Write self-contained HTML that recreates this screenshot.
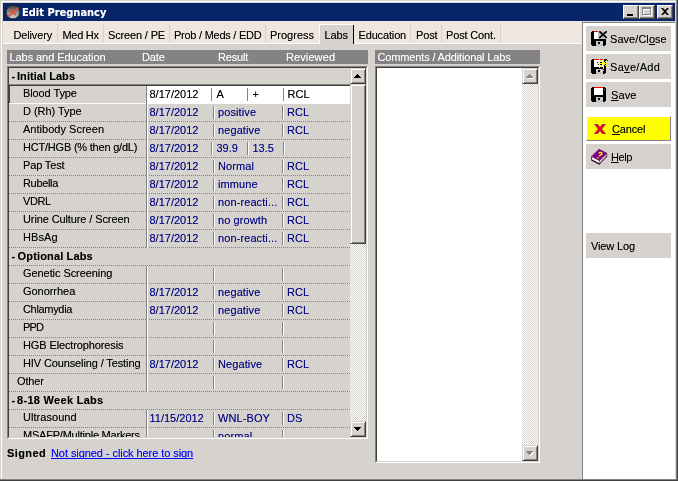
<!DOCTYPE html>
<html><head><meta charset="utf-8"><title>Edit Pregnancy</title>
<style>
*{box-sizing:border-box;margin:0;padding:0}
html,body{width:678px;height:481px;overflow:hidden;background:#d6d3ce;font-family:"Liberation Sans",sans-serif;font-size:11px;line-height:13px;color:#000;letter-spacing:-0.15px;text-shadow:0 0 0 rgba(0,0,0,.45)}
body{position:relative}
div,span,a,i,svg{position:absolute;white-space:nowrap;display:block}
u{text-decoration:underline;text-decoration-thickness:1px;text-underline-offset:1px;text-decoration-skip-ink:none}
/* window frame */
#fw{left:1px;top:1px;width:676px;height:479px;border-left:1px solid #fff;border-top:1px solid #fff}
#fr1{left:676px;top:0;width:1px;height:481px;background:#848284}
#fr2{left:677px;top:0;width:1px;height:481px;background:#424142}
#fb1{left:0;top:479px;width:677px;height:1px;background:#848284}
#fb2{left:0;top:480px;width:678px;height:1px;background:#424142}
#title{left:3px;top:3px;width:672px;height:18px;background:#08246b}
#title .t{left:19px;top:3px;color:#fff;text-shadow:0 0 0 rgba(255,255,255,.45);font-weight:bold;font-size:11px;line-height:13px;font-family:"DejaVu Sans Condensed","DejaVu Sans","Liberation Sans",sans-serif;letter-spacing:0}
.cb{top:2px;width:16px;height:14px;background:#d6d3ce;border:1px solid;border-color:#fff #424142 #424142 #fff;box-shadow:inset -1px -1px 0 #848284}
#tabs{left:3px;top:21px;width:579px;height:22px;background:#efe7de}
#tabline{left:3px;top:43px;width:579px;height:1px;background:#fff}
.tab{top:29px;height:13px}
.sep{top:24px;width:1px;height:18px;background:#d6d3ce}
#tabsel{left:319px;top:24px;width:34px;height:20px;background:#d6d3ce;border-left:1px solid #fff;border-top:1px solid #fff}
#tabselr{left:353px;top:25px;width:1px;height:19px;background:#000}
.hbar{top:50px;height:14px;background:#848284;color:#fff;text-shadow:0 0 0 rgba(255,255,255,.45)}
.hbar span{top:1px}
/* grid */
#grid{left:7px;top:66px;width:361px;height:373px;border:1px solid;border-color:#848284 #fff #fff #848284}
#gridi{left:0;top:0;width:359px;height:371px;border:1px solid;border-color:#424142 #d6d3ce #d6d3ce #424142;overflow:hidden}
.row{left:0;width:341px;height:18px}
.row::after{content:"";position:absolute;left:0;top:17px;width:341px;height:1px;background:repeating-linear-gradient(90deg,#848284 0 1px,transparent 1px 2px)}
.hy{left:2.4px;top:2px;font-weight:bold}
.ht{left:8px;top:2px;font-weight:bold}
.lb{top:1px}
.c{top:2px;color:#000084;letter-spacing:0;text-shadow:0 0 0 rgba(0,0,132,.45)}
.v{top:2px;width:2px;height:13px;background:linear-gradient(90deg,#848284 0 1px,#fff 1px 2px)}
.v.v1{left:137px;top:0;height:18px;z-index:2}
.row.sel::after{background:#fff}
.row.sel .selbg{left:138px;top:0;width:203px;height:17px;background:#fff}
.row.sel .v{background:#848284;width:1px}
#selt1{left:0;top:16px;width:341px;height:1px;background:#848284}
#selt2{left:0;top:17px;width:341px;height:1px;background:#424142}
#sell{left:0;top:17px;width:1px;height:18px;background:#424142}
.row.sel .c{color:#000;text-shadow:0 0 0 rgba(0,0,0,.45)}
/* scrollbars */
.vs{width:16px;background:repeating-conic-gradient(#fff 0 25%,#d6d3ce 0 50%) 0 0/2px 2px}
.sbtn{left:0;width:16px;height:16px;background:#d6d3ce;border:1px solid;border-color:#d6d3ce #424142 #424142 #d6d3ce;box-shadow:inset 1px 1px 0 #fff,inset -1px -1px 0 #848284}
#cbox{left:375px;top:66px;width:165px;height:397px;border:1px solid;border-color:#848284 #fff #fff #848284;background:#fff}
#cboxi{left:0;top:0;width:163px;height:395px;border:1px solid;border-color:#424142 #d6d3ce #d6d3ce #424142}
#right{left:582px;top:22px;width:93px;height:457px;background:#fff;border-left:1px solid #848284;border-top:1px solid #848284}
.btn{left:586px;width:85px;height:25px;background:#d6d3ce}
.btn .tx{top:7px}
#signed{left:7px;top:447px;font-weight:bold;letter-spacing:0.4px}
#slink{left:51px;top:447px;color:#0000ff;text-decoration:underline;text-decoration-skip-ink:none;text-decoration-thickness:1px;text-underline-offset:1px;letter-spacing:-0.07px;text-shadow:0 0 0 rgba(0,0,255,.45)}
</style></head><body>
<div id="all" style="left:0;top:0;width:678px;height:481px;will-change:transform">
<div id="fw"></div><div id="fr1"></div><div id="fr2"></div><div id="fb1"></div><div id="fb2"></div>
<div id="title">
<svg style="left:2px;top:1px" width="16" height="16" viewBox="0 0 16 16"><defs><linearGradient id="g1" x1="0" y1="0" x2="0" y2="1"><stop offset="0" stop-color="#3a3a3a"/><stop offset="0.5" stop-color="#8a8a8a"/><stop offset="1" stop-color="#d8d8d8"/></linearGradient></defs><circle cx="8" cy="8" r="6.8" fill="url(#g1)" stroke="#2a2418" stroke-width="0.8"/><path d="M3.6 12.2 L12.6 4.2" stroke="#e8503a" stroke-width="1.8" stroke-linecap="round"/><path d="M5.4 5.8 L10.4 10.4" stroke="#e8503a" stroke-width="1.5" stroke-linecap="round"/></svg>
<span class="t">Edit Pregnancy</span>
<div class="cb" style="left:620px"><i style="left:3px;top:8px;width:6px;height:2px;background:#000"></i></div>
<div class="cb" style="left:636px"><i style="left:3px;top:2px;width:9px;height:8px;border:1px solid #fff;border-top-width:2px"></i><i style="left:2px;top:1px;width:9px;height:8px;border:1px solid #848284;border-top-width:2px"></i></div>
<div class="cb" style="left:654px"><svg style="left:3px;top:2px" width="8" height="7" viewBox="0 0 8 7"><path d="M0 0h2l2 2 2-2h2L5 3.5 8 7H6L4 5 2 7H0l3-3.5z" fill="#000"/></svg></div>
</div>
<div id="tabs"></div><div id="tabline"></div>
<span class="tab" style="left:13.5px">Delivery</span><i class="sep" style="left:57px"></i>
<span class="tab" style="left:62.5px;letter-spacing:-0.3px">Med Hx</span><i class="sep" style="left:103px"></i>
<span class="tab" style="left:108px">Screen / PE</span><i class="sep" style="left:169px"></i>
<span class="tab" style="left:174px;letter-spacing:-0.25px">Prob / Meds / EDD</span><i class="sep" style="left:265px"></i>
<span class="tab" style="left:270px;letter-spacing:0px">Progress</span>
<div id="tabsel"></div><i id="tabselr"></i>
<span class="tab" style="left:324.5px">Labs</span>
<span class="tab" style="left:358.5px">Education</span><i class="sep" style="left:410px"></i>
<span class="tab" style="left:416px">Post</span><i class="sep" style="left:441px"></i>
<span class="tab" style="left:446px">Post Cont.</span><i class="sep" style="left:500px"></i>
<div class="hbar" style="left:7px;width:361px"><span style="left:2.5px;letter-spacing:-0.07px">Labs and Education</span><span style="left:135px">Date</span><span style="left:211px">Result</span><span style="left:279px;letter-spacing:0.1px">Reviewed</span></div>
<div class="hbar" style="left:375px;width:165px"><span style="left:2.5px;letter-spacing:-0.15px">Comments / Additional Labs</span></div>
<div id="grid"><div id="gridi">
<div class="row" style="top:0px"><span class="hy">-</span><span class="ht" style="letter-spacing:0.05px">Initial Labs</span></div>
<div class="row sel" style="top:18px"><i class="selbg"></i><span class="lb" style="left:14px;letter-spacing:-0.1px">Blood Type</span><i class="v v1"></i><span class="c" style="left:140.5px">8/17/2012</span><i class="v" style="left:202px"></i><span class="c" style="left:207.5px">A</span><i class="v" style="left:238px"></i><span class="c" style="left:243.5px">+</span><i class="v" style="left:274px"></i><span class="c" style="left:278.5px">RCL</span></div>
<div class="row" style="top:36px"><span class="lb" style="left:14px;letter-spacing:-0.04px">D (Rh) Type</span><i class="v v1"></i><span class="c" style="left:140.5px">8/17/2012</span><i class="v" style="left:204px"></i><span class="c" style="left:209px;letter-spacing:0.1px">positive</span><i class="v" style="left:273px"></i><span class="c" style="left:278px">RCL</span></div>
<div class="row" style="top:54px"><span class="lb" style="left:14px;letter-spacing:0.02px">Antibody Screen</span><i class="v v1"></i><span class="c" style="left:140.5px">8/17/2012</span><i class="v" style="left:204px"></i><span class="c" style="left:209px;letter-spacing:0.1px">negative</span><i class="v" style="left:273px"></i><span class="c" style="left:278px">RCL</span></div>
<div class="row" style="top:72px"><span class="lb" style="left:14px;letter-spacing:-0.21px">HCT/HGB (% then g/dL)</span><i class="v v1"></i><span class="c" style="left:140.5px">8/17/2012</span><i class="v" style="left:202px"></i><span class="c" style="left:207.5px">39.9</span><i class="v" style="left:238px"></i><span class="c" style="left:243.5px">13.5</span><i class="v" style="left:274px"></i></div>
<div class="row" style="top:90px"><span class="lb" style="left:14px">Pap Test</span><i class="v v1"></i><span class="c" style="left:140.5px">8/17/2012</span><i class="v" style="left:204px"></i><span class="c" style="left:209px;letter-spacing:0.1px">Normal</span><i class="v" style="left:273px"></i><span class="c" style="left:278px">RCL</span></div>
<div class="row" style="top:108px"><span class="lb" style="left:14px;letter-spacing:-0.34px">Rubella</span><i class="v v1"></i><span class="c" style="left:140.5px">8/17/2012</span><i class="v" style="left:204px"></i><span class="c" style="left:209px;letter-spacing:0.1px">immune</span><i class="v" style="left:273px"></i><span class="c" style="left:278px">RCL</span></div>
<div class="row" style="top:126px"><span class="lb" style="left:14px;letter-spacing:-0.4px">VDRL</span><i class="v v1"></i><span class="c" style="left:140.5px">8/17/2012</span><i class="v" style="left:204px"></i><span class="c" style="left:209px;letter-spacing:0.1px">non-reacti...</span><i class="v" style="left:273px"></i><span class="c" style="left:278px">RCL</span></div>
<div class="row" style="top:144px"><span class="lb" style="left:14px;letter-spacing:-0.11px">Urine Culture / Screen</span><i class="v v1"></i><span class="c" style="left:140.5px">8/17/2012</span><i class="v" style="left:204px"></i><span class="c" style="left:209px;letter-spacing:0.1px">no growth</span><i class="v" style="left:273px"></i><span class="c" style="left:278px">RCL</span></div>
<div class="row" style="top:162px"><span class="lb" style="left:14px;letter-spacing:0.09px">HBsAg</span><i class="v v1"></i><span class="c" style="left:140.5px">8/17/2012</span><i class="v" style="left:204px"></i><span class="c" style="left:209px;letter-spacing:0.1px">non-reacti...</span><i class="v" style="left:273px"></i><span class="c" style="left:278px">RCL</span></div>
<div class="row" style="top:180px"><span class="hy">-</span><span class="ht" style="left:8.6px;letter-spacing:0.15px">Optional Labs</span></div>
<div class="row" style="top:198px"><span class="lb" style="left:14px;letter-spacing:-0.07px">Genetic Screening</span><i class="v v1"></i><i class="v" style="left:204px"></i><i class="v" style="left:273px"></i></div>
<div class="row" style="top:216px"><span class="lb" style="left:14px;letter-spacing:-0.04px">Gonorrhea</span><i class="v v1"></i><span class="c" style="left:140.5px">8/17/2012</span><i class="v" style="left:204px"></i><span class="c" style="left:209px;letter-spacing:0.1px">negative</span><i class="v" style="left:273px"></i><span class="c" style="left:278px">RCL</span></div>
<div class="row" style="top:234px"><span class="lb" style="left:14px;letter-spacing:-0.32px">Chlamydia</span><i class="v v1"></i><span class="c" style="left:140.5px">8/17/2012</span><i class="v" style="left:204px"></i><span class="c" style="left:209px;letter-spacing:0.1px">negative</span><i class="v" style="left:273px"></i><span class="c" style="left:278px">RCL</span></div>
<div class="row" style="top:252px"><span class="lb" style="left:14px;letter-spacing:-0.85px">PPD</span><i class="v v1"></i><i class="v" style="left:204px"></i><i class="v" style="left:273px"></i></div>
<div class="row" style="top:270px"><span class="lb" style="left:14px;letter-spacing:-0.12px">HGB Electrophoresis</span><i class="v v1"></i><i class="v" style="left:204px"></i><i class="v" style="left:273px"></i></div>
<div class="row" style="top:288px"><span class="lb" style="left:14px;letter-spacing:-0.12px">HIV Counseling / Testing</span><i class="v v1"></i><span class="c" style="left:140.5px">8/17/2012</span><i class="v" style="left:204px"></i><span class="c" style="left:209px;letter-spacing:0.1px">Negative</span><i class="v" style="left:273px"></i><span class="c" style="left:278px">RCL</span></div>
<div class="row" style="top:306px"><span class="lb" style="left:8px">Other</span><i class="v v1"></i><i class="v" style="left:204px"></i><i class="v" style="left:273px"></i></div>
<div class="row" style="top:324px"><span class="hy">-</span><span class="ht" style="letter-spacing:0.3px">8-18 Week Labs</span></div>
<div class="row" style="top:342px"><span class="lb" style="left:14px;letter-spacing:0.05px">Ultrasound</span><i class="v v1"></i><span class="c" style="left:140.5px">11/15/2012</span><i class="v" style="left:204px"></i><span class="c" style="left:209px;letter-spacing:0.1px">WNL-BOY</span><i class="v" style="left:273px"></i><span class="c" style="left:278px">DS</span></div>
<div class="row" style="top:360px"><span class="lb" style="left:14px;letter-spacing:-0.22px">MSAFP/Multiple Markers</span><i class="v v1"></i><i class="v" style="left:204px"></i><span class="c" style="left:209px;letter-spacing:0.1px">normal</span><i class="v" style="left:273px"></i></div>
<i id="selt1"></i><i id="selt2"></i><i id="sell"></i>
<div class="vs" style="left:341px;top:0;height:369px"><div class="sbtn" style="top:0"><svg style="left:3px;top:5px" width="7" height="4"><path d="M3 0h1v1h1v1h1v1h1v1H0V3h1V2h1V1h1z" fill="#000"/></svg></div><div class="sbtn" style="top:16px;height:160px"></div><div class="sbtn" style="top:353px"><svg style="left:3px;top:5px" width="7" height="4"><path d="M0 0h7v1H6v1H5v1H4v1H3V3H2V2H1V1H0z" fill="#000"/></svg></div></div>
</div></div>
<div id="cbox"><div id="cboxi"><div class="vs" style="left:145px;top:0;height:393px"><div class="sbtn" style="top:0"><svg style="left:3px;top:5px" width="8" height="5"><path d="M4 1h1v1h1v1h1v1h1v1H1V4h1V3h1V2h1z" fill="#fff"/><path d="M3 0h1v1h1v1h1v1h1v1H0V3h1V2h1V1h1z" fill="#848284"/></svg></div><div class="sbtn" style="top:377px"><svg style="left:3px;top:5px" width="8" height="5"><path d="M1 1h7v1H7v1H6v1H5v1H4V4H3V3H2V2H1z" fill="#fff"/><path d="M0 0h7v1H6v1H5v1H4v1H3V3H2V2H1V1H0z" fill="#848284"/></svg></div></div></div></div>
<span id="signed">Signed</span><a id="slink">Not signed - click here to sign</a>
<div id="right"></div>
<div class="btn" style="top:26px"><svg style="left:5px;top:5px" width="17" height="16" viewBox="0 0 17 16" shape-rendering="crispEdges"><path d="M1 0h13v1h1v13h-1v1H1v-1H0V1h1z" fill="#000"/><rect x="3" y="1" width="4" height="7" fill="#fff"/><rect x="3" y="0" width="4" height="1" fill="#f00"/><rect x="7" y="0" width="8" height="8" fill="#c6c3c6"/><rect x="5" y="10" width="7" height="5" fill="#c6c3c6"/><rect x="7" y="11" width="2" height="2" fill="#000"/><rect x="10" y="11" width="1" height="2" fill="#e0e0e0"/><path d="M8.3 0.3L15.7 6.9M15.7 0.3L8.3 6.9" stroke="#000" stroke-width="1.7" shape-rendering="auto"/></svg><span class="tx" style="left:24px;letter-spacing:0.05px">Save/Cl<u>o</u>se</span></div>
<div class="btn" style="top:54px"><svg style="left:5px;top:5px" width="17" height="16" viewBox="0 0 17 16" shape-rendering="crispEdges"><path d="M1 0h13v1h1v13h-1v1H1v-1H0V1h1z" fill="#000"/><rect x="3" y="1" width="9" height="7" fill="#fff"/><rect x="3" y="0" width="9" height="1" fill="#f00"/><rect x="5" y="10" width="7" height="5" fill="#c6c3c6"/><rect x="7" y="11" width="2" height="2" fill="#000"/><rect x="10" y="11" width="1" height="2" fill="#e0e0e0"/><rect x="6" y="3" width="1" height="1" fill="#000"/><rect x="7" y="5" width="1" height="1" fill="#000"/><rect x="9" y="3" width="2" height="1" fill="#000"/><rect x="9" y="5" width="2" height="1" fill="#000"/><rect x="9" y="1" width="1" height="1" fill="#000"/><rect x="14" y="0" width="3" height="2" fill="#000"/><rect x="11" y="3" width="3" height="3" fill="#ffff00"/><rect x="12" y="0" width="1" height="10" fill="#ffff00"/><rect x="8" y="4" width="8" height="1" fill="#ffff00"/><rect x="10" y="2" width="1" height="1" fill="#ffff00"/><rect x="9" y="1" width="1" height="1" fill="#ffff00"/><rect x="8" y="0" width="1" height="1" fill="#ffff00"/><rect x="14" y="2" width="1" height="1" fill="#ffff00"/><rect x="15" y="1" width="1" height="1" fill="#ffff00"/><rect x="16" y="0" width="1" height="1" fill="#ffff00"/><rect x="10" y="6" width="1" height="1" fill="#ffff00"/><rect x="9" y="7" width="1" height="1" fill="#ffff00"/><rect x="8" y="8" width="1" height="1" fill="#ffff00"/><rect x="14" y="6" width="1" height="1" fill="#ffff00"/><rect x="15" y="7" width="1" height="1" fill="#ffff00"/><rect x="16" y="8" width="1" height="1" fill="#ffff00"/><rect x="12" y="11" width="1" height="1" fill="#ffff00"/></svg><span class="tx" style="left:24px;letter-spacing:0.3px">Sa<u>v</u>e/Add</span></div>
<div class="btn" style="top:82px"><svg style="left:5px;top:5px" width="17" height="16" viewBox="0 0 17 16" shape-rendering="crispEdges"><path d="M1 0h13v1h1v13h-1v1H1v-1H0V1h1z" fill="#000"/><rect x="3" y="1" width="9" height="7" fill="#fff"/><rect x="3" y="0" width="9" height="1" fill="#f00"/><rect x="13" y="2" width="1" height="1" fill="#848284"/><rect x="5" y="10" width="7" height="5" fill="#c6c3c6"/><rect x="7" y="11" width="2" height="2" fill="#000"/><rect x="10" y="11" width="1" height="2" fill="#e0e0e0"/></svg><span class="tx" style="left:25px;letter-spacing:0.1px"><u>S</u>ave</span></div>
<div class="btn" style="top:116px;background:#ffff00;border:1px solid;border-color:#fff #848284 #848284 #fff"><svg style="left:7px;top:7px" width="12" height="10" viewBox="0 0 12 10"><path d="M0 0H3.5L6 2.9 8.5 0H12L7.9 5 12 10H8.5L6 7.1 3.5 10H0L4.1 5z" fill="#f0001c" stroke="#6a7f90" stroke-opacity="0.8" stroke-width="0.7"/></svg><span class="tx" style="left:25px;top:6px"><u>C</u>ancel</span></div>
<div class="btn" style="top:144px"><svg style="left:5px;top:5px" width="17" height="16" viewBox="0 0 17 16"><path d="M0 7.2L8.4 11.6 16.2 4.2V7.6L8.3 15.8 0.3 11.4z" fill="#000"/><path d="M0.8 8.1L8.4 12V14.3L0.9 10.5z" fill="#fff"/><path d="M8.6 12.1L15.7 5.2V7.1L8.6 14.4z" fill="#f4f4f4"/><path d="M10 11.2V12.6M11.5 9.8V11.2M13 8.4V9.8M14.5 7V8.4" stroke="#848284" stroke-width="0.6"/><path d="M1 11L8.3 15 15.8 7.6" stroke="#840084" stroke-width="0.7" stroke-dasharray="1.5 1" fill="none"/><path d="M7.75 0L16 4.3 8.4 11.6 0.2 7.3z" fill="#840084"/><path d="M7.75 0L16 4.3" stroke="#000" stroke-width="0.7" stroke-dasharray="1.2 1" fill="none"/><path d="M7.75 0L0.2 7.3" stroke="#e8e4e8" stroke-width="0.5" stroke-dasharray="1 1" fill="none"/><path d="M7.9 4.4C8.2 2.9 11 3 10.9 4.8C10.8 6 9 5.8 8.2 7.2" fill="none" stroke="#ffff00" stroke-width="1.3"/><circle cx="7" cy="8.7" r="0.8" fill="#ffff00"/></svg><span class="tx" style="left:25px;letter-spacing:-0.4px"><u>H</u>elp</span></div>
<div class="btn" style="top:233px"><span class="tx" style="left:5px">View Log</span></div>
</div>
</body></html>
